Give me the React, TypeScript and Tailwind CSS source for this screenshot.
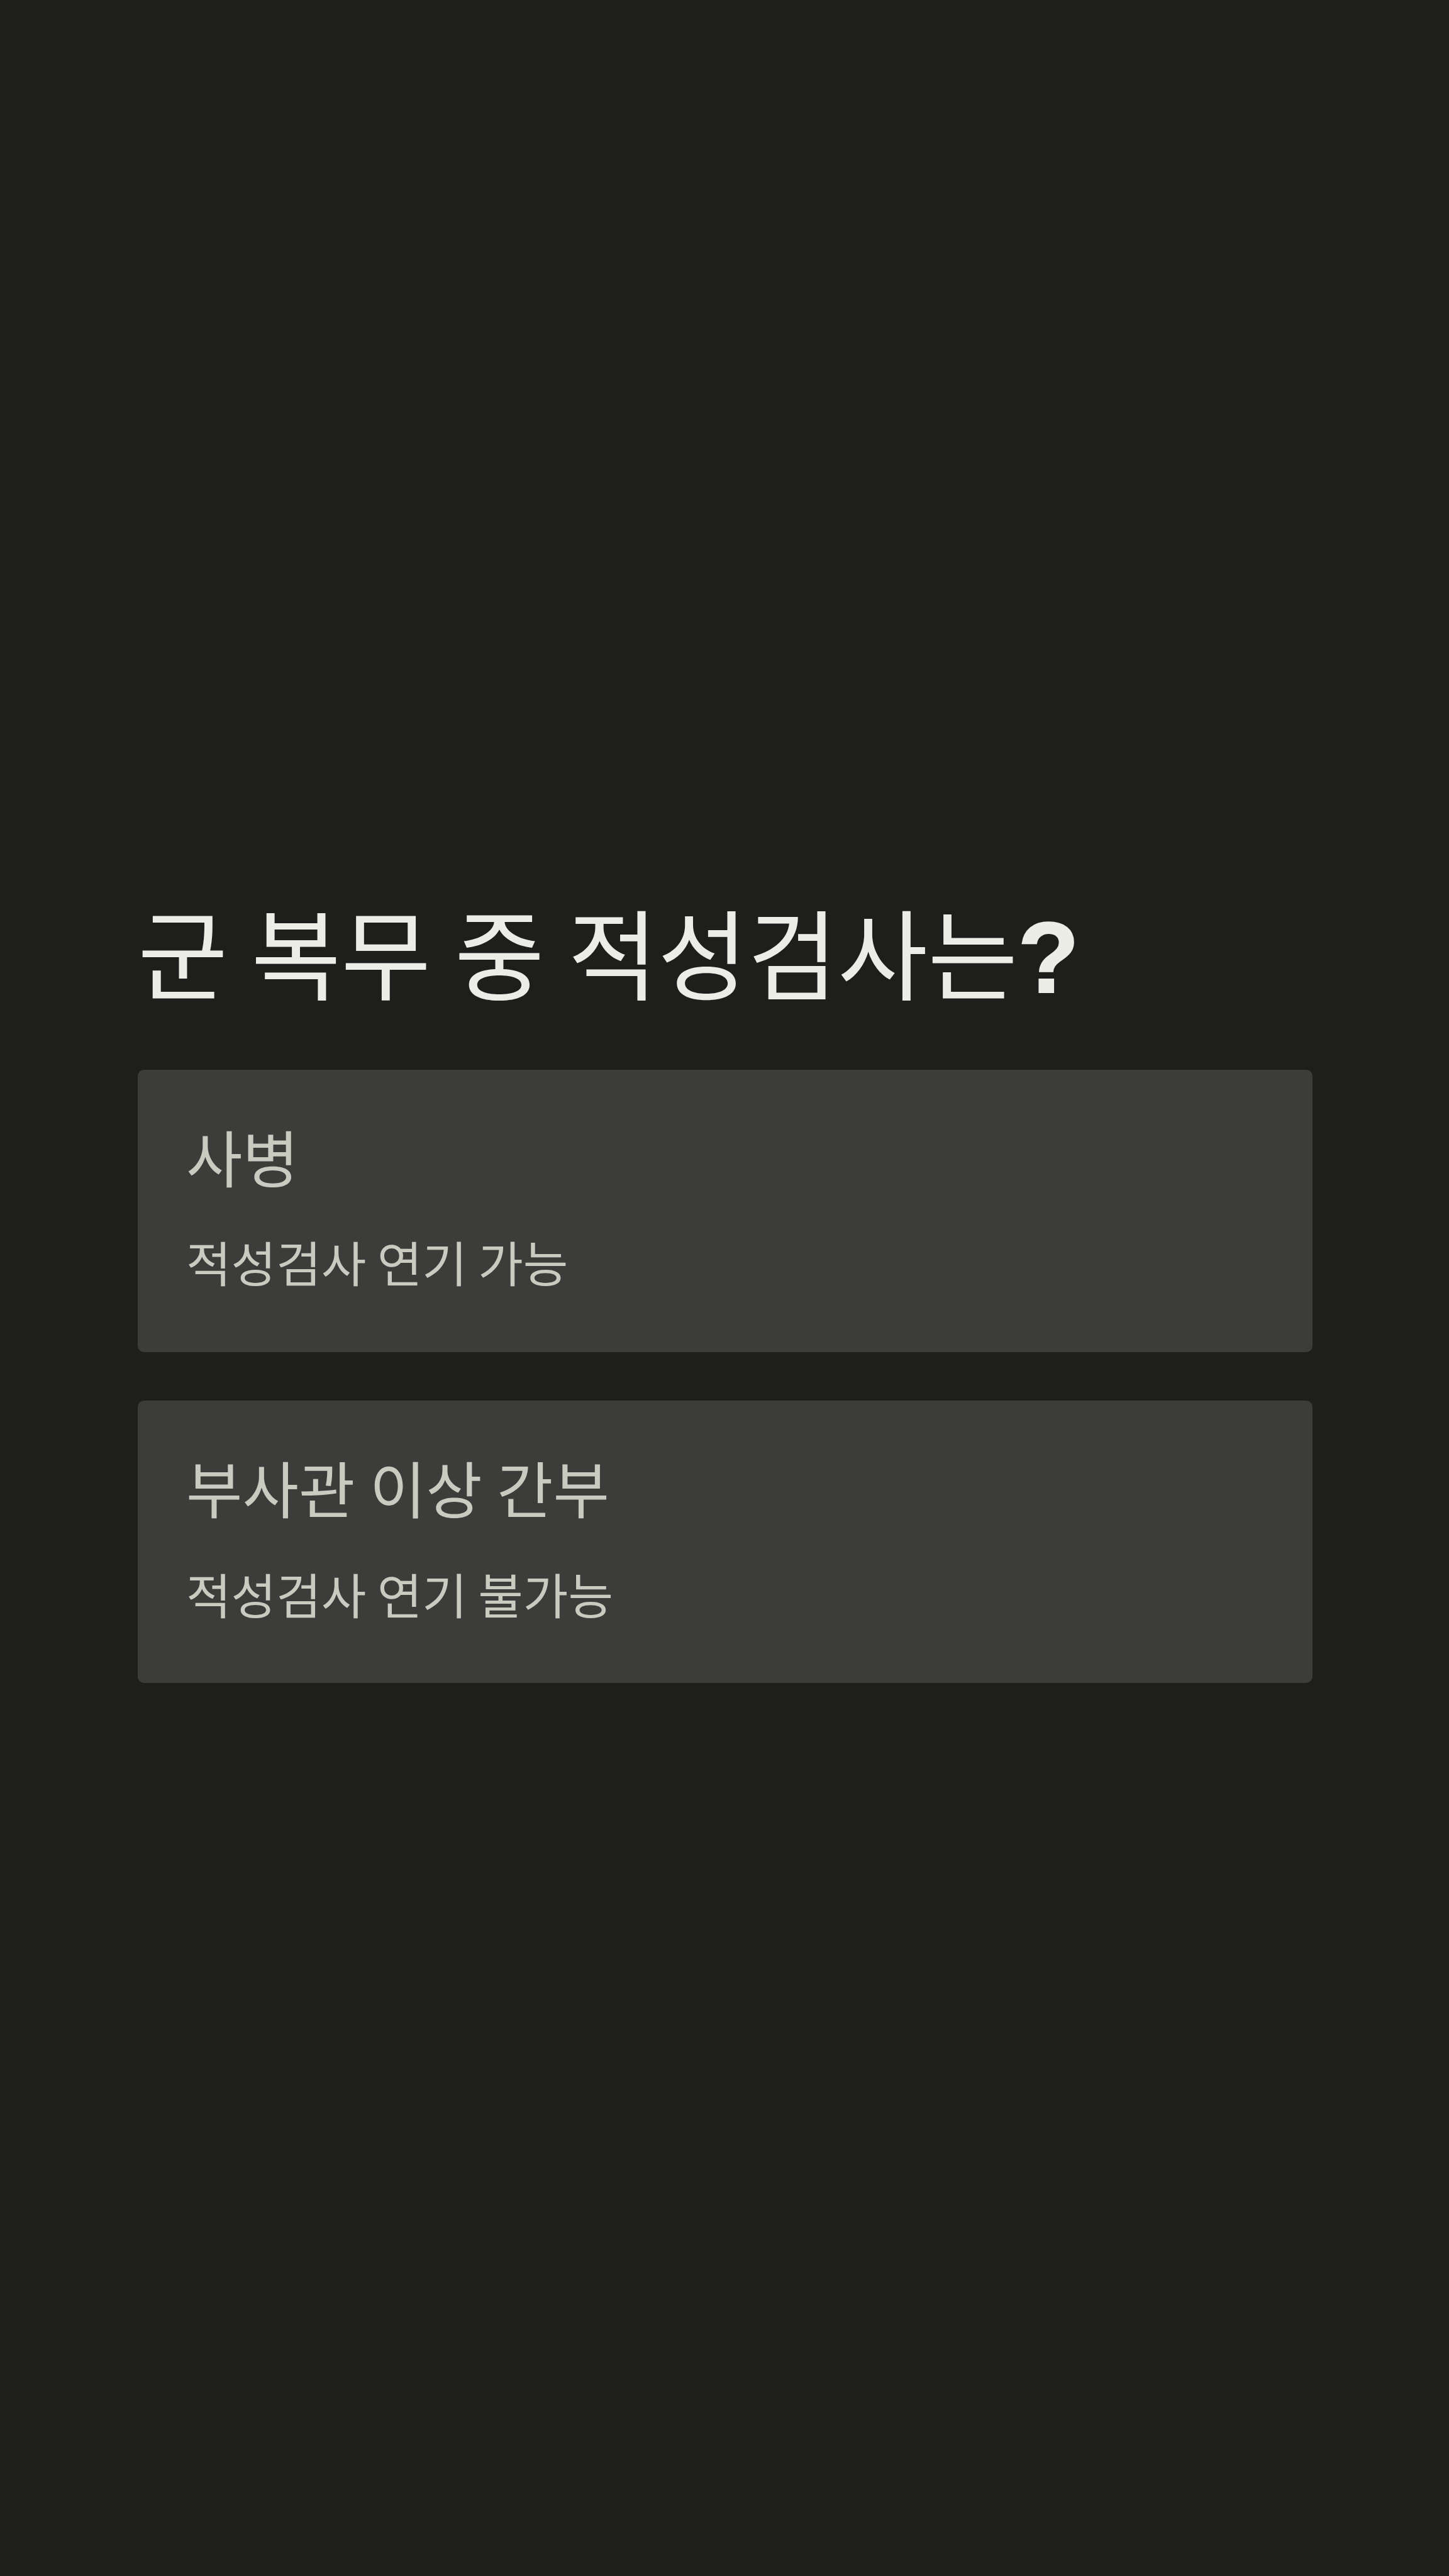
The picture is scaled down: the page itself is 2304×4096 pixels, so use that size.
import React from 'react';

interface Option {
  title: string;
  description: string;
  gap: string;
}

const options: Option[] = [
  { title: '사병', description: '적성검사 연기 가능', gap: 'mt-[42px]' },
  { title: '부사관 이상 간부', description: '적성검사 연기 불가능', gap: 'mt-[44px]' },
];

const OptionCard: React.FC<{ option: Option }> = ({ option }) => (
  <div className="h-[449px] rounded-[10px] bg-[#3c3c3a] px-[77px] pt-[71px] text-[#c9cac0]">
    <div className="text-[97.3px] leading-[131px] [word-spacing:1.4px] whitespace-nowrap">{option.title}</div>
    <div className={`${option.gap} text-[77.8px] leading-[120px] whitespace-nowrap`}>{option.description}</div>
  </div>
);

const App: React.FC = () => {
  return (
    <div className="h-[4096px] w-[2304px] overflow-hidden bg-[#1e1e1c] px-[219px] pt-[1400px] font-['Noto_Sans_CJK_KR',sans-serif]">
      {/* Question */}
      <h1 className="h-[301px] text-[155.5px] leading-[221px] [word-spacing:2.4px] whitespace-nowrap text-[#ecede7]">
        군 복무 중 적성검사는
        <span className="font-['Liberation_Sans',sans-serif] text-[160px] font-bold [-webkit-text-stroke:2px_#ecede7]">?</span>
      </h1>

      {/* Options */}
      <div className="flex w-[1868px] flex-col gap-[77px]">
        {options.map(option => (
          <OptionCard key={option.title} option={option} />
        ))}
      </div>
    </div>
  );
};

export default App;
